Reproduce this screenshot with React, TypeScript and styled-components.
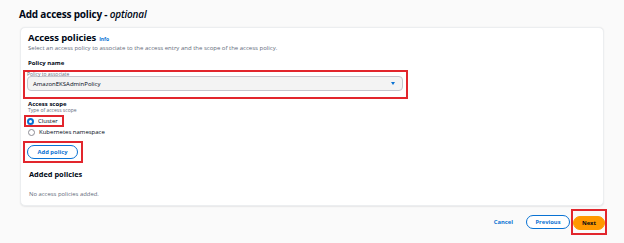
import styled, { createGlobalStyle } from "styled-components";

const GlobalStyle = createGlobalStyle`
  html, body {
    margin: 0;
    padding: 0;
    background: #fafafa;
  }
  body {
    font-family: "Open Sans", "Liberation Sans", sans-serif;
    color: #000716;
  }
`;

const Page = styled.div`
  width: 624px;
  height: 243px;
  box-sizing: border-box;
  padding: 6px 20px 0 19px;
  overflow: hidden;
`;

const Title = styled.h1`
  margin: 0;
  height: 16px;
  font-size: 10px;
  line-height: 16px;
  font-weight: 700;
  letter-spacing: -0.2px;
  em {
    font-weight: 600;
  }
`;

const Card = styled.section`
  margin: 5px 0 0 1px;
  height: 179px;
  box-sizing: border-box;
  background: #fff;
  border-radius: 5px;
  border: 1px solid #eceef0;
  box-shadow: 0 0.5px 1.5px rgba(0, 7, 22, 0.08);
  padding: 4px 8px 0 7px;
  display: flex;
  flex-direction: column;
`;

const CardHead = styled.div`
  display: flex;
  align-items: baseline;
  gap: 3px;
  height: 12px;
`;

const H2 = styled.h2`
  margin: 0;
  font-size: 9.5px;
  line-height: 12px;
  font-weight: 700;
  letter-spacing: -0.1px;
`;

const InfoLink = styled.span`
  font-size: 5px;
  font-weight: 700;
  color: #0972d3;
`;

const Description = styled.p`
  margin: 0;
  height: 8px;
  font-size: 6px;
  line-height: 8px;
  color: #5f6b7a;
`;

const Label = styled.div<{ $top?: number }>`
  margin-top: ${(p) => p.$top ?? 0}px;
  height: 8px;
  font-size: 6px;
  line-height: 8px;
  font-weight: 700;
`;

const Constraint = styled.div`
  height: 4px;
  font-size: 5px;
  line-height: 4px;
  color: #5f6b7a;
`;

const Highlight = styled.div<{ $pad: string; $left?: number; $top?: number }>`
  align-self: flex-start;
  border: 2px solid #e2262d;
  padding: ${(p) => p.$pad};
  margin-left: ${(p) => p.$left ?? 0}px;
  margin-top: ${(p) => p.$top ?? 0}px;
`;

const Select = styled.div`
  width: 376px;
  height: 15px;
  box-sizing: border-box;
  border: 1px solid #c6c6cd;
  border-radius: 4px;
  background: #f3f3f3;
  display: flex;
  align-items: center;
  justify-content: space-between;
  padding: 0 7px 0 5px;
  font-size: 6px;
  color: #000716;
`;

const Caret = styled.span`
  width: 0;
  height: 0;
  border-left: 2.2px solid transparent;
  border-right: 2.2px solid transparent;
  border-top: 3px solid #0972d3;
`;

const RadioRow = styled.label<{ $h: number }>`
  display: flex;
  align-items: center;
  gap: 4px;
  height: ${(p) => p.$h}px;
  font-size: 6px;
`;

const RadioDot = styled.span<{ $checked?: boolean }>`
  width: 7px;
  height: 7px;
  box-sizing: border-box;
  border-radius: 50%;
  background: #fff;
  border: ${(p) => (p.$checked ? "2.2px solid #0972d3" : "0.8px solid #8c8c94")};
`;

const PillButton = styled.button<{ $primary?: boolean; $w: number }>`
  width: ${(p) => p.$w}px;
  height: 14px;
  box-sizing: border-box;
  border-radius: 8px;
  border: 1.2px solid ${(p) => (p.$primary ? "#ff9900" : "#0972d3")};
  background: ${(p) => (p.$primary ? "#ff9900" : "#fff")};
  color: ${(p) => (p.$primary ? "#000716" : "#0972d3")};
  font-family: inherit;
  font-size: 5.8px;
  font-weight: 700;
  padding: 0;
  display: flex;
  align-items: center;
  justify-content: center;
`;

const H3 = styled.h3`
  margin: 6px 0 0 1px;
  height: 10px;
  font-size: 7.4px;
  line-height: 10px;
  font-weight: 700;
`;

const Empty = styled.p`
  margin: 11px 0 0 1px;
  font-size: 5.9px;
  line-height: 8px;
  color: #5f6b7a;
`;

const Footer = styled.div`
  display: flex;
  justify-content: flex-end;
  align-items: center;
  margin: 3px -3px 0 0;
`;

const TextButton = styled.span`
  font-size: 5.8px;
  font-weight: 700;
  color: #0972d3;
  margin-right: 13px;
  margin-top: -1px;
`;

const FooterGap = styled.span`
  width: 1px;
`;

export default function App() {
  return (
    <>
      <GlobalStyle />
      <Page>
        <Title>
          Add access policy - <em>optional</em>
        </Title>
        <Card>
          <CardHead>
            <H2>Access policies</H2>
            <InfoLink>Info</InfoLink>
          </CardHead>
          <Description>
            Select an access policy to associate to the access entry and the scope of the access policy.
          </Description>
          <Label $top={7}>Policy name</Label>
          <Highlight $pad="0 3px 6px 2px" $left={-5} $top={3}>
            <Constraint>Policy to associate</Constraint>
            <Select>
              AmazonEKSAdminPolicy
              <Caret />
            </Select>
          </Highlight>
          <Label $top={1}>Access scope</Label>
          <Constraint>Type of access scope</Constraint>
          <Highlight $pad="0 4px 0 1px" $left={-4} $top={3}>
            <RadioRow $h={8}>
              <RadioDot $checked />
              Cluster
            </RadioRow>
          </Highlight>
          <RadioRow $h={10}>
            <RadioDot />
            Kubernetes namespace
          </RadioRow>
          <Highlight $pad="2px 3px 2px 2px" $left={-5} $top={4}>
            <PillButton $w={51}>Add policy</PillButton>
          </Highlight>
          <H3>Added policies</H3>
          <Empty>No access policies added.</Empty>
        </Card>
        <Footer>
          <TextButton>Cancel</TextButton>
          <PillButton $w={44}>Previous</PillButton>
          <FooterGap />
          <Highlight $pad="5px 0 3px 0">
            <PillButton $primary $w={32}>Next</PillButton>
          </Highlight>
        </Footer>
      </Page>
    </>
  );
}
